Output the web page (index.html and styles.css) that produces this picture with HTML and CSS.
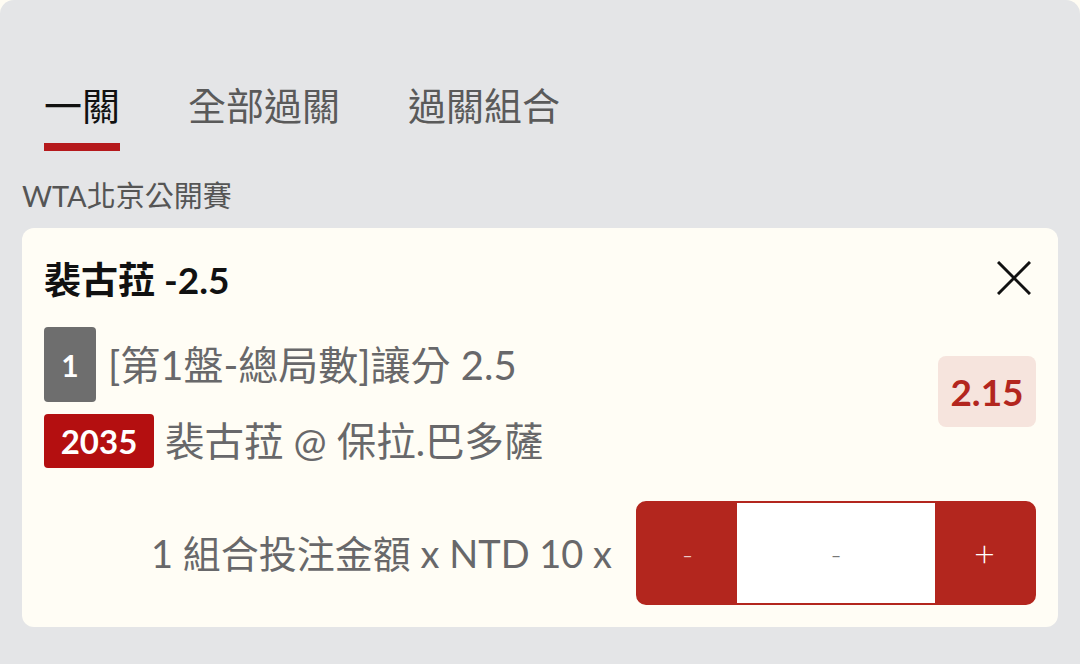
FILE: index.html
```html
<!DOCTYPE html>
<html lang="zh-Hant">
<head>
    <meta charset="UTF-8">
    <meta name="viewport" content="width=device-width, initial-scale=1.0">
    <title>投注單</title>
    <link rel="stylesheet" href="styles.css">
</head>
<body>
    <div class="panel">
        <div class="tabs">
            <div class="tab active">一關</div>
            <div class="tab">全部過關</div>
            <div class="tab">過關組合</div>
        </div>

        <div class="league">WTA北京公開賽</div>

        <div class="bet-card">
            <div class="bet-head">
                <div class="bet-title">裴古菈 -2.5</div>
                <button class="close" aria-label="close">
                    <svg width="34" height="34" viewBox="0 0 34 34">
                        <path d="M1 1 L33 33 M33 1 L1 33" stroke="#111" stroke-width="3" fill="none"/>
                    </svg>
                </button>
            </div>

            <div class="bet-body">
                <div class="bet-info">
                    <div class="info-row">
                        <span class="leg-no">1</span>
                        <span class="market">[第1盤-總局數]讓分 2.5</span>
                    </div>
                    <div class="info-row">
                        <span class="match-no">2035</span>
                        <span class="match">裴古菈 @ 保拉.巴多薩</span>
                    </div>
                </div>
                <div class="odds">2.15</div>
            </div>

            <div class="stake-row">
                <span class="stake-label">1 組合投注金額 x NTD 10 x</span>
                <div class="stepper">
                    <button class="step minus">-</button>
                    <div class="step-value">-</div>
                    <button class="step plus">+</button>
                </div>
            </div>
        </div>
    </div>
</body>
</html>
```

FILE: styles.css
```css
body {
    margin: 0;
    background-color: #fffcf3;
    font-family: Lato, "Noto Sans CJK TC", sans-serif;
}

.panel {
    min-height: 664px;
    background-color: #e4e5e7;
    border-radius: 14px 14px 0 0;
    overflow: hidden;
}

.tabs {
    display: flex;
    gap: 68px;
    padding: 83px 0 0 44px;
}

.tab {
    font-size: 38px;
    line-height: 44px;
    color: #5a5a5a;
    padding-bottom: 16px;
    border-bottom: 8px solid transparent;
}

.tab.active {
    color: #111;
    border-bottom-color: #b5191c;
}

.league {
    margin-top: 29px;
    padding-left: 22px;
    font-size: 29px;
    line-height: 32px;
    color: #555;
}

.bet-card {
    margin: 16px 22px 0;
    padding: 28px 22px 22px;
    background-color: #fffdf5;
    border-radius: 12px;
}

.bet-head {
    display: flex;
    align-items: center;
    justify-content: space-between;
    height: 44px;
}

.bet-title {
    font-size: 37px;
    font-weight: bold;
    color: #111;
}

.close {
    background: none;
    border: none;
    padding: 0;
    margin-right: 5px;
    display: flex;
    cursor: pointer;
}

.bet-body {
    display: flex;
    justify-content: space-between;
    margin-top: 27px;
}

.bet-info {
    display: flex;
    flex-direction: column;
    gap: 12px;
}

.info-row {
    display: flex;
    align-items: center;
    gap: 12px;
}

.leg-no {
    width: 52px;
    height: 75px;
    display: flex;
    align-items: center;
    justify-content: center;
    background-color: #6e6e6e;
    border-radius: 4px;
    color: #fff;
    font-size: 30px;
    font-weight: bold;
}

.match-no {
    width: 110px;
    height: 54px;
    display: flex;
    align-items: center;
    justify-content: center;
    background-color: #b40f10;
    border-radius: 4px;
    color: #fff;
    font-size: 33px;
    font-weight: bold;
}

.market, .match {
    font-size: 40px;
    line-height: 1;
    color: #68686a;
}

.match {
    font-size: 39.5px;
    margin-left: -1px;
}

.odds {
    align-self: flex-start;
    margin-top: 29px;
    width: 98px;
    height: 71px;
    display: flex;
    align-items: center;
    justify-content: center;
    background-color: #f6e4dd;
    border-radius: 8px;
    color: #b3261e;
    font-size: 37px;
    font-weight: bold;
}

.stake-row {
    display: flex;
    justify-content: flex-end;
    align-items: center;
    gap: 24px;
    margin-top: 33px;
}

.stake-label {
    font-size: 38px;
    line-height: 1;
    color: #68686a;
}

.stepper {
    display: flex;
    width: 400px;
    height: 104px;
    box-sizing: border-box;
    border: 2px solid #b3261e;
    border-radius: 10px;
    background-color: #b3261e;
    overflow: hidden;
}

.step {
    width: 99px;
    border: none;
    background-color: #b3261e;
    font-family: Lato, sans-serif;
    font-size: 30px;
    font-weight: 300;
    cursor: pointer;
}

.step.minus {
    color: #ecc9c6;
}

.step.plus {
    color: #fff;
    font-size: 36px;
}

.step-value {
    flex: 1;
    display: flex;
    align-items: center;
    justify-content: center;
    background-color: #fff;
    color: #777;
    font-size: 30px;
    font-weight: 300;
}
```
